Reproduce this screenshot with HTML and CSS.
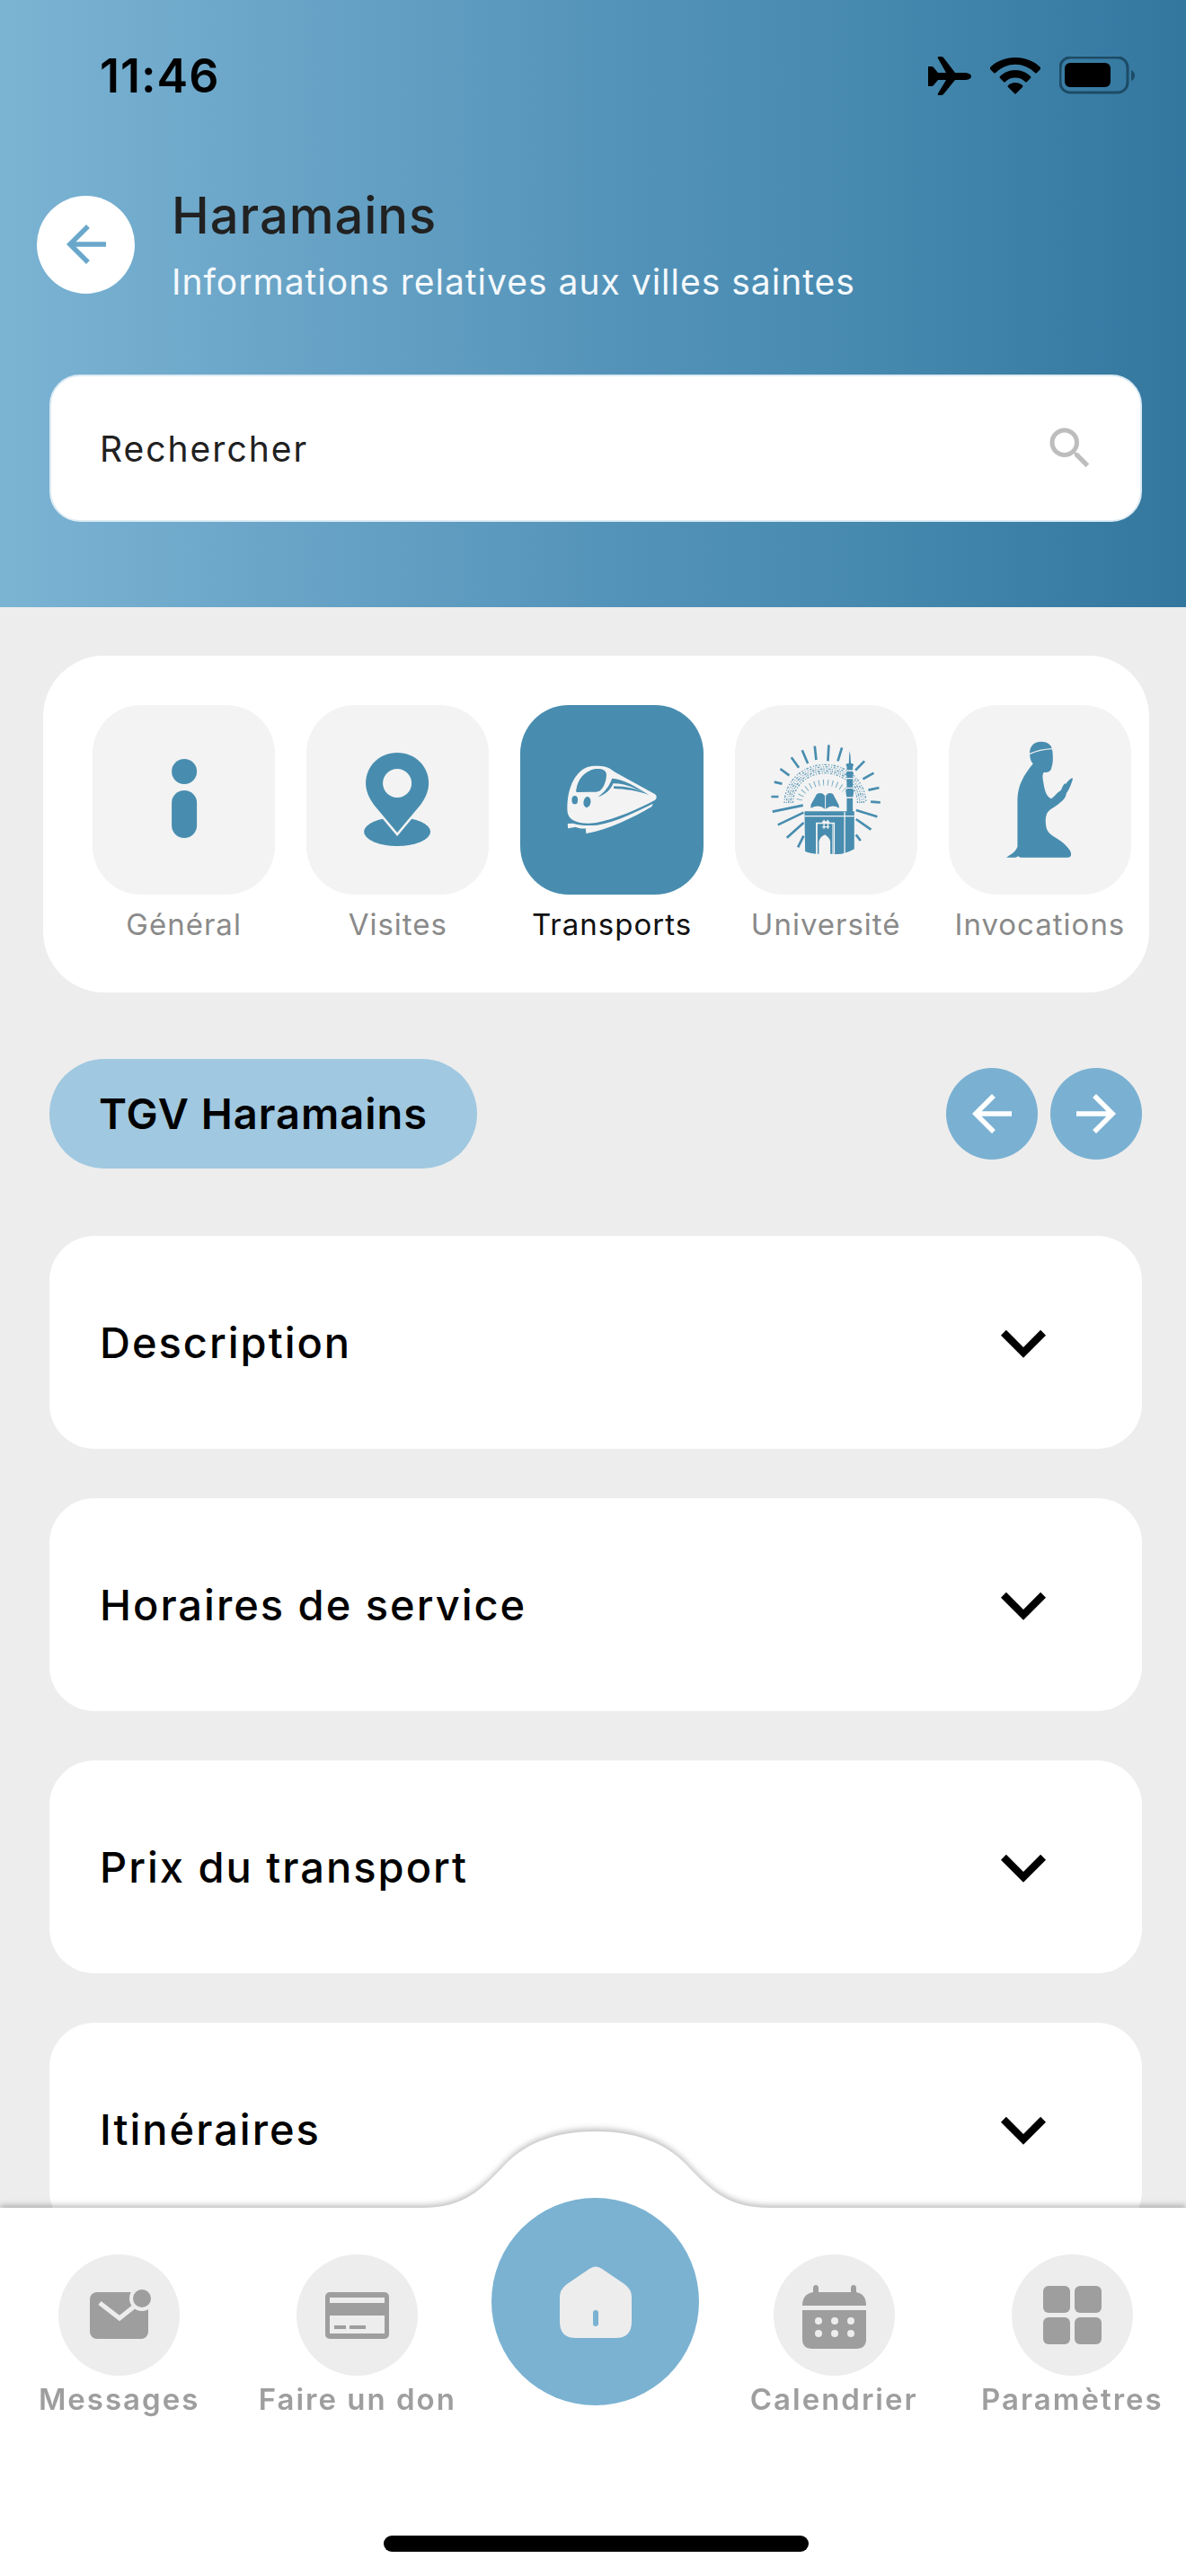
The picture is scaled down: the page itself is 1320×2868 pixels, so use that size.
FILE: index.html
```html
<!DOCTYPE html>
<html lang="fr">

<head>
  <meta charset="UTF-8" />
  <meta name="viewport" content="width=device-width, initial-scale=1.0" />
  <title>Haramains</title>
  <link rel="stylesheet" href="styles.css">
</head>

<body>
  <header class="header">
    <div class="status-bar">
      <span class="time">11:46</span>
      <div class="status-icons">
        <svg width="48" height="43" viewBox="0 0 48 43">
          <path d="M0 11h4q1 0 2 1l5 6h9L11 2q-1-2 1-2h2q2 0 3 1l13 17h12q6 1 6 4t-6 4H30L17 42q-1 1-3 1h-2q-2 0-1-2l9-15h-9l-5 6q-1 1-2 1H0V22z" />
        </svg>
        <svg width="56" height="41" viewBox="0 0 56 41">
          <path d="M28 0C17 0 7 4 0 11q-1 1 0 2l4 4q1 1 2 0a31 31 0 0 1 44 0q1 1 2 0l4-4q1-1 0-2C49 4 39 0 28 0z" />
          <path d="M28 14c-7 0-13 3-17 7q-1 1 0 2l4 4q1 1 2 0a16 16 0 0 1 22 0q1 1 2 0l4-4q1-1 0-2c-4-4-10-7-17-7z" />
          <path d="M28 28c-3 0-6 1-8 3q-1 1 0 2l7 7q1 1 2 0l7-7q1-1 0-2c-2-2-5-3-8-3z" />
        </svg>
        <svg width="84" height="42" viewBox="0 0 84 42">
          <rect x="1" y="1" width="75" height="39" rx="11" fill="none" stroke="#1c4b66" stroke-width="3" />
          <rect x="6" y="7" width="51" height="27" rx="6" />
          <path d="M80 15q4 2 4 6t-4 6z" fill="#1c4b66" />
        </svg>
      </div>
    </div>

    <div class="title-row">
      <button class="back" aria-label="Retour">
        <svg class="arrow" viewBox="0 0 24 24"><path d="M20 11H7.83l5.59-5.59L12 4l-8 8 8 8 1.41-1.41L7.83 13H20v-2z" /></svg>
      </button>
      <div class="titles">
        <h1>Haramains</h1>
        <p class="subtitle">Informations relatives aux villes saintes</p>
      </div>
    </div>

    <div class="search">
      <input type="text" placeholder="Rechercher" aria-label="Rechercher">
      <svg viewBox="0 0 24 24"><path d="M15.5 14h-.79l-.28-.27A6.47 6.47 0 0 0 16 9.5 6.5 6.5 0 1 0 9.5 16c1.61 0 3.09-.59 4.23-1.57l.27.28v.79l5 4.99L20.49 19l-4.99-5zm-6 0C7.01 14 5 11.99 5 9.5S7.01 5 9.5 5 14 7.01 14 9.5 11.99 14 9.5 14z" /></svg>
    </div>
  </header>

  <main>
    <section class="categories">
      <button class="category">
        <svg class="tile" viewBox="0 0 203 211">
          <circle cx="102" cy="74" r="14" />
          <rect x="88" y="95" width="28" height="53" rx="14" />
        </svg>
        <span>Général</span>
      </button>
      <button class="category">
        <svg class="tile" viewBox="0 0 203 211">
          <ellipse cx="101" cy="141" rx="37" ry="16" />
          <path class="pin" d="M101 53c-20 0-35 15-35 34 0 9 4 17 9 24l26 31 26-31c5-7 9-15 9-24 0-19-15-34-35-34z" />
          <circle class="hole" cx="101" cy="87" r="16" />
        </svg>
        <span>Visites</span>
      </button>
      <button class="category active">
        <svg class="tile" viewBox="-66 -105 609 633">
          <path d="M92 255C88 215 96 150 135 116 152 99 178 96 204 99c22 2 32 10 48 21l132 73q10 9 0 19c-60 32-130 62-196 76-50 7-90-3-96-33z" />
          <path d="M92 291l18-1c20 7 48 9 80 6 66-11 132-45 187-72l-4 10C305 274 230 310 154 324l-2-17c-14 2-25-2-33-5l-26 5z" />
          <g class="cut">
            <path d="M121 176c4-32 28-62 64-68 26-2 40 5 36 28-3 22-12 40-23 46-10 4-22 4-36 3l-38 1q-6-2-3-10z" />
            <ellipse cx="116" cy="212" rx="10" ry="14" />
            <ellipse cx="157" cy="219" rx="12" ry="18" transform="rotate(8 157 219)" />
            <path d="M240 140c36 2 80 26 122 55-40-22-82-40-118-38-6 18-26 38-51 45 22-16 40-38 47-62z" />
            <path d="M246 166c40 0 80 8 118 29-40-14-80-20-118-21z" />
          </g>
        </svg>
        <span>Transports</span>
      </button>
      <button class="category">
        <svg class="tile" viewBox="-69 -45 609 633">
          <path class="rays" d="M197 92l5 46M244 88l-3 54M288 97l-14 45M155 106l19 44M119 130l25 34M82 168l30 22M62 212l26 6M52 261h24M56 311l102-21M74 355l86-41M104 398l56-50M141 430l19-38M363 142l-30 31M394 182l-36 20M412 231l-36 8M384 278l32 2M335 306l71 22M335 336l50 35M335 388l15 20" />
          <g class="script">
            <path d="M96 282a136 128 0 0 1 272 0" stroke-dasharray="5 6 3 4 8 5" />
            <path d="M103 282a129 121 0 0 1 258 0" stroke-dasharray="3 5 7 4 2 6" />
            <path d="M110 282a122 114 0 0 1 244 0" stroke-dasharray="8 3 4 6 3 4" />
            <path d="M117 282a115 107 0 0 1 230 0" stroke-dasharray="4 4 9 5 3 3" />
            <path d="M124 282a108 100 0 0 1 216 0" stroke-dasharray="7 5 3 5" />
          </g>
          <path class="halo" d="M146 272a86 70 0 0 1 150-34" />
          <path d="M184 288l20-36q18-8 27 6v44q-20-18-47-3zM277 288l-19-36q-17-8-24 6v44q20-18 45-3z" />
          <path d="M311 150l1-28 2-14 2 14 2 28zM304 150h20v162h-20z" />
          <path d="M302 152h24v7h-24zM301 180h26l-3 13h-20zM300 238h28l-3 22h-22z" />
          <path class="cutline" d="M303 174h22M303 200h22M303 232h22M303 264h22" />
          <path d="M163 310h166v126q-40 22-70 16V348h-57v104q-22-2-37-8z" />
          <path d="M206 352h50v100h-7v-42q-4-14-18-22-15 6-20 22v42h-5z" />
          <path class="cutline" d="M163 326h166M297 312v138M203 452V349h59v103M222 345h24M222 362h24M228 338v30M241 338v30" />
        </svg>
        <span>Université</span>
      </button>
      <button class="category">
        <svg class="tile" viewBox="-105 -45 609 633">
          <path d="M165 120c-2-28 14-43 38-43 24 0 37 12 38 34 2 20 2 38-3 52-3 16-15 18-25 16-7 6-5 20-2 36 3 24 10 46 26 53 12-8 19-21 31-27 6-8 6-18 15-24l3 1c5-7 10-14 20-19q4-1 1 9c-6 18-12 32-20 42-1 14-10 22-23 33-16 14-38 22-43 38-5 14-3 28-1 42 5 24 30 33 50 47 18 14 35 32 33 45q-1 9-12 9H134l-8-4-8 4H87c10-9 30-16 37-36V268c2-46 20-78 52-117-8-8-10-18-11-31z" />
          <path class="cutline" d="M163 119q34-16 78-18" />
        </svg>
        <span>Invocations</span>
      </button>
    </section>

    <div class="section-bar">
      <h2>TGV Haramains</h2>
      <div class="pager">
        <button aria-label="Précédent">
          <svg class="arrow" viewBox="0 0 24 24"><path d="M20 11H7.83l5.59-5.59L12 4l-8 8 8 8 1.41-1.41L7.83 13H20v-2z" /></svg>
        </button>
        <button aria-label="Suivant">
          <svg class="arrow" viewBox="0 0 24 24"><path d="M12 4l-1.41 1.41L16.17 11H4v2h12.17l-5.58 5.59L12 20l8-8z" /></svg>
        </button>
      </div>
    </div>

    <div class="panels">
      <button class="panel">
        <span>Description</span>
        <svg viewBox="0 0 24 24"><path d="M7.41 8.59L12 13.17l4.59-4.58L18 10l-6 6-6-6z" /></svg>
      </button>
      <button class="panel">
        <span>Horaires de service</span>
        <svg viewBox="0 0 24 24"><path d="M7.41 8.59L12 13.17l4.59-4.58L18 10l-6 6-6-6z" /></svg>
      </button>
      <button class="panel">
        <span>Prix du transport</span>
        <svg viewBox="0 0 24 24"><path d="M7.41 8.59L12 13.17l4.59-4.58L18 10l-6 6-6-6z" /></svg>
      </button>
      <button class="panel">
        <span>Itinéraires</span>
        <svg viewBox="0 0 24 24"><path d="M7.41 8.59L12 13.17l4.59-4.58L18 10l-6 6-6-6z" /></svg>
      </button>
    </div>
  </main>

  <nav class="tab-bar">
    <!-- white bar and the bump above the home button -->
    <div class="tab-bg">
      <svg class="bump" width="386" height="88" viewBox="0 0 386 88">
        <path d="M0 85C46 85 66 65 92 37 116 12 150 0 193 0s77 12 101 37c26 28 46 48 92 48v3H0z" />
      </svg>
      <div class="bar"></div>
    </div>
    <div class="tabs">
      <a class="tab" href="#messages">
        <svg viewBox="0 0 135 135">
          <rect x="35" y="42" width="65" height="52" rx="8" />
          <path class="line" d="M46 54l22 17 20-16" />
          <circle class="dot" cx="93" cy="49" r="12" />
        </svg>
        <span>Messages</span>
      </a>
      <a class="tab" href="#don">
        <svg viewBox="0 0 135 135">
          <rect x="32" y="42" width="71" height="52" rx="5" />
          <path class="cut" d="M37 48h61v6H37zM37 68h61v20H37z" />
          <path d="M42 79h13v4H42zM59 79h18v4H59z" />
        </svg>
        <span>Faire un don</span>
      </a>
      <a class="home" href="#accueil" aria-label="Accueil">
        <svg viewBox="0 0 80 80" width="80" height="80">
          <path d="M33 3q7-5 14 0l25 17q8 6 8 14v28q0 18-18 18H18Q0 80 0 62V34q0-8 8-14z" />
          <rect x="37" y="49" width="6" height="18" rx="3" />
        </svg>
      </a>
      <a class="tab" href="#calendrier">
        <svg viewBox="0 0 135 135">
          <path d="M47 34q3 0 3 4v4h36v-4q0-4 3-4t3 4v4q11 2 11 15H32q0-13 12-15v-4q0-4 3-4z" />
          <path d="M32 62h71v32q0 11-11 11H43q-11 0-11-11z" />
          <g class="cut">
            <circle cx="50" cy="74" r="4" />
            <circle cx="68" cy="74" r="4" />
            <circle cx="86" cy="74" r="4" />
            <circle cx="50" cy="88" r="4" />
            <circle cx="68" cy="88" r="4" />
            <circle cx="86" cy="88" r="4" />
          </g>
        </svg>
        <span>Calendrier</span>
      </a>
      <a class="tab" href="#parametres">
        <svg viewBox="0 0 135 135">
          <rect x="35" y="35" width="30" height="30" rx="6" />
          <rect x="70" y="35" width="30" height="30" rx="6" />
          <rect x="35" y="70" width="30" height="30" rx="6" />
          <rect x="70" y="70" width="30" height="30" rx="6" />
        </svg>
        <span>Paramètres</span>
      </a>
    </div>
    <div class="home-indicator"></div>
  </nav>
</body>

</html>
```

FILE: styles.css
```css
* {
  box-sizing: border-box;
}

body {
  margin: 0;
  padding-bottom: 360px;
  background-color: #ededed;
  color: #000;
  font-family: Inter, "Liberation Sans", sans-serif;
}

button {
  border: none;
  padding: 0;
  font: inherit;
  color: inherit;
  cursor: pointer;
}

svg {
  display: block;
}

h1,
h2,
p {
  margin: 0;
}

/* Header */
.header {
  height: 676px;
  padding: 0 49px 0 55px;
  background: linear-gradient(to right, #7bb3d3, #5493b9 52%, #4588ae 75%, #33779f);
}

.status-bar {
  display: flex;
  justify-content: space-between;
  align-items: center;
  height: 168px;
  padding: 0 8px 0 56px;
}

.time {
  font-size: 52px;
  font-weight: 600;
  letter-spacing: 1px;
}

.status-icons {
  display: flex;
  align-items: center;
  gap: 21px;
}

.title-row {
  display: flex;
  align-items: center;
  gap: 41px;
  height: 208px;
  margin-left: -14px;
}

.titles {
  padding-top: 8px;
}

.back {
  display: grid;
  place-items: center;
  width: 109px;
  height: 109px;
  border-radius: 50%;
  background-color: #fff;
  fill: #6aa8cb;
}

.arrow {
  width: 66px;
  height: 66px;
}

h1 {
  font-size: 56px;
  font-weight: 500;
  line-height: 76px;
  letter-spacing: 1px;
  color: #212121;
}

.subtitle {
  font-size: 39px;
  line-height: 72px;
  letter-spacing: 1px;
  color: #f4f9fc;
}

.search {
  display: flex;
  align-items: center;
  height: 164px;
  margin-top: 41px;
  padding: 0 48px 0 54px;
  border: 2px solid #dcebf4;
  border-radius: 34px;
  background-color: #fff;
}

.search input {
  flex: 1;
  min-width: 0;
  padding: 0;
  border: none;
  outline: none;
  background: none;
  font: inherit;
  font-size: 39px;
  letter-spacing: 2px;
}

.search input::placeholder {
  color: #212121;
  opacity: 1;
}

.search svg {
  width: 60px;
  height: 60px;
  fill: #bdbdbd;
}

/* Categories */
.categories {
  display: flex;
  gap: 35px;
  margin: 54px 41px 0 48px;
  padding: 55px 20px 55px 55px;
  border-radius: 68px;
  background-color: #fff;
}

.category {
  flex: 1;
  min-width: 0;
  background: none;
  font-size: 33px;
  line-height: 42px;
  letter-spacing: 1px;
  color: #8a8a8a;
}

.category span {
  display: flex;
  justify-content: center;
  margin-top: 12px;
}

.tile {
  width: 100%;
  height: 211px;
  border-radius: 54px;
  background-color: #f3f3f3;
  fill: #488daf;
}

.category.active {
  color: #111;
}

.active .tile {
  background-color: #488daf;
  fill: #f3f3f3;
}

.active .cut {
  fill: #488daf;
}

.pin {
  stroke: #f3f3f3;
  stroke-width: 5px;
  paint-order: stroke;
}

.hole {
  fill: #f3f3f3;
}

.rays {
  stroke: #488daf;
  stroke-width: 8px;
}

.script {
  fill: none;
  stroke: #488daf;
  stroke-width: 4px;
  opacity: 0.8;
}

.halo {
  fill: none;
  stroke: #488daf;
  stroke-width: 20px;
  stroke-dasharray: 3 12;
  opacity: 0.7;
}

.cutline {
  fill: none;
  stroke: #f3f3f3;
  stroke-width: 4px;
}

/* Section title */
.section-bar {
  display: flex;
  justify-content: space-between;
  align-items: center;
  margin: 74px 49px 0 55px;
}

h2 {
  padding: 0 55px;
  border-radius: 61px;
  background-color: #a0c8e0;
  font-size: 47px;
  font-weight: 600;
  line-height: 122px;
  letter-spacing: 1px;
}

.pager {
  display: flex;
  gap: 14px;
}

.pager button {
  display: grid;
  place-items: center;
  width: 102px;
  height: 102px;
  border-radius: 50%;
  background-color: #7ab1d2;
  fill: #fff;
}

/* Panels */
.panels {
  display: flex;
  flex-direction: column;
  gap: 55px;
  margin: 75px 49px 0 55px;
}

.panel {
  display: flex;
  justify-content: space-between;
  align-items: center;
  height: 237px;
  padding: 0 82px 0 56px;
  border-radius: 50px;
  background-color: #fff;
  font-size: 47px;
  font-weight: 500;
  letter-spacing: 2px;
}

.panel svg {
  width: 100px;
  height: 100px;
}

/* Bottom tabs */
.tab-bar {
  position: fixed;
  left: 0;
  right: 0;
  bottom: 0;
  height: 410px;
}

.tab-bg {
  position: absolute;
  inset: 0;
  filter: drop-shadow(0 -3px 3px rgba(0, 0, 0, 0.25));
}

.bump {
  position: absolute;
  left: 50%;
  bottom: 100%;
  margin: 0 0 -3px -190px;
  fill: #fff;
}

.bar {
  height: 100%;
  background-color: #fff;
}

.tabs {
  position: relative;
  display: grid;
  grid-template-columns: repeat(5, 1fr);
  justify-items: center;
  align-items: start;
  margin-right: -6px;
}

.tab {
  display: flex;
  flex-direction: column;
  align-items: center;
  gap: 6px;
  margin-top: 52px;
  color: #9e9e9e;
  font-size: 33px;
  font-weight: 600;
  line-height: 40px;
  letter-spacing: 2px;
  text-decoration: none;
  white-space: nowrap;
}

.tab svg {
  width: 135px;
  height: 135px;
  border-radius: 50%;
  background-color: #ededed;
  fill: #9e9e9e;
}

.tab .cut {
  fill: #ededed;
}

.tab .line {
  fill: none;
  stroke: #ededed;
  stroke-width: 5px;
}

.tab .dot {
  stroke: #ededed;
  stroke-width: 4px;
}

.home {
  display: grid;
  place-items: center;
  width: 231px;
  height: 231px;
  margin-top: -11px;
  border-radius: 50%;
  background-color: #7bb2d2;
  fill: #ededed;
}

.home rect {
  fill: #7bb2d2;
}

.home-indicator {
  position: absolute;
  left: 50%;
  bottom: 27px;
  width: 473px;
  height: 18px;
  margin-left: -233px;
  border-radius: 9px;
  background-color: #000;
}
```
